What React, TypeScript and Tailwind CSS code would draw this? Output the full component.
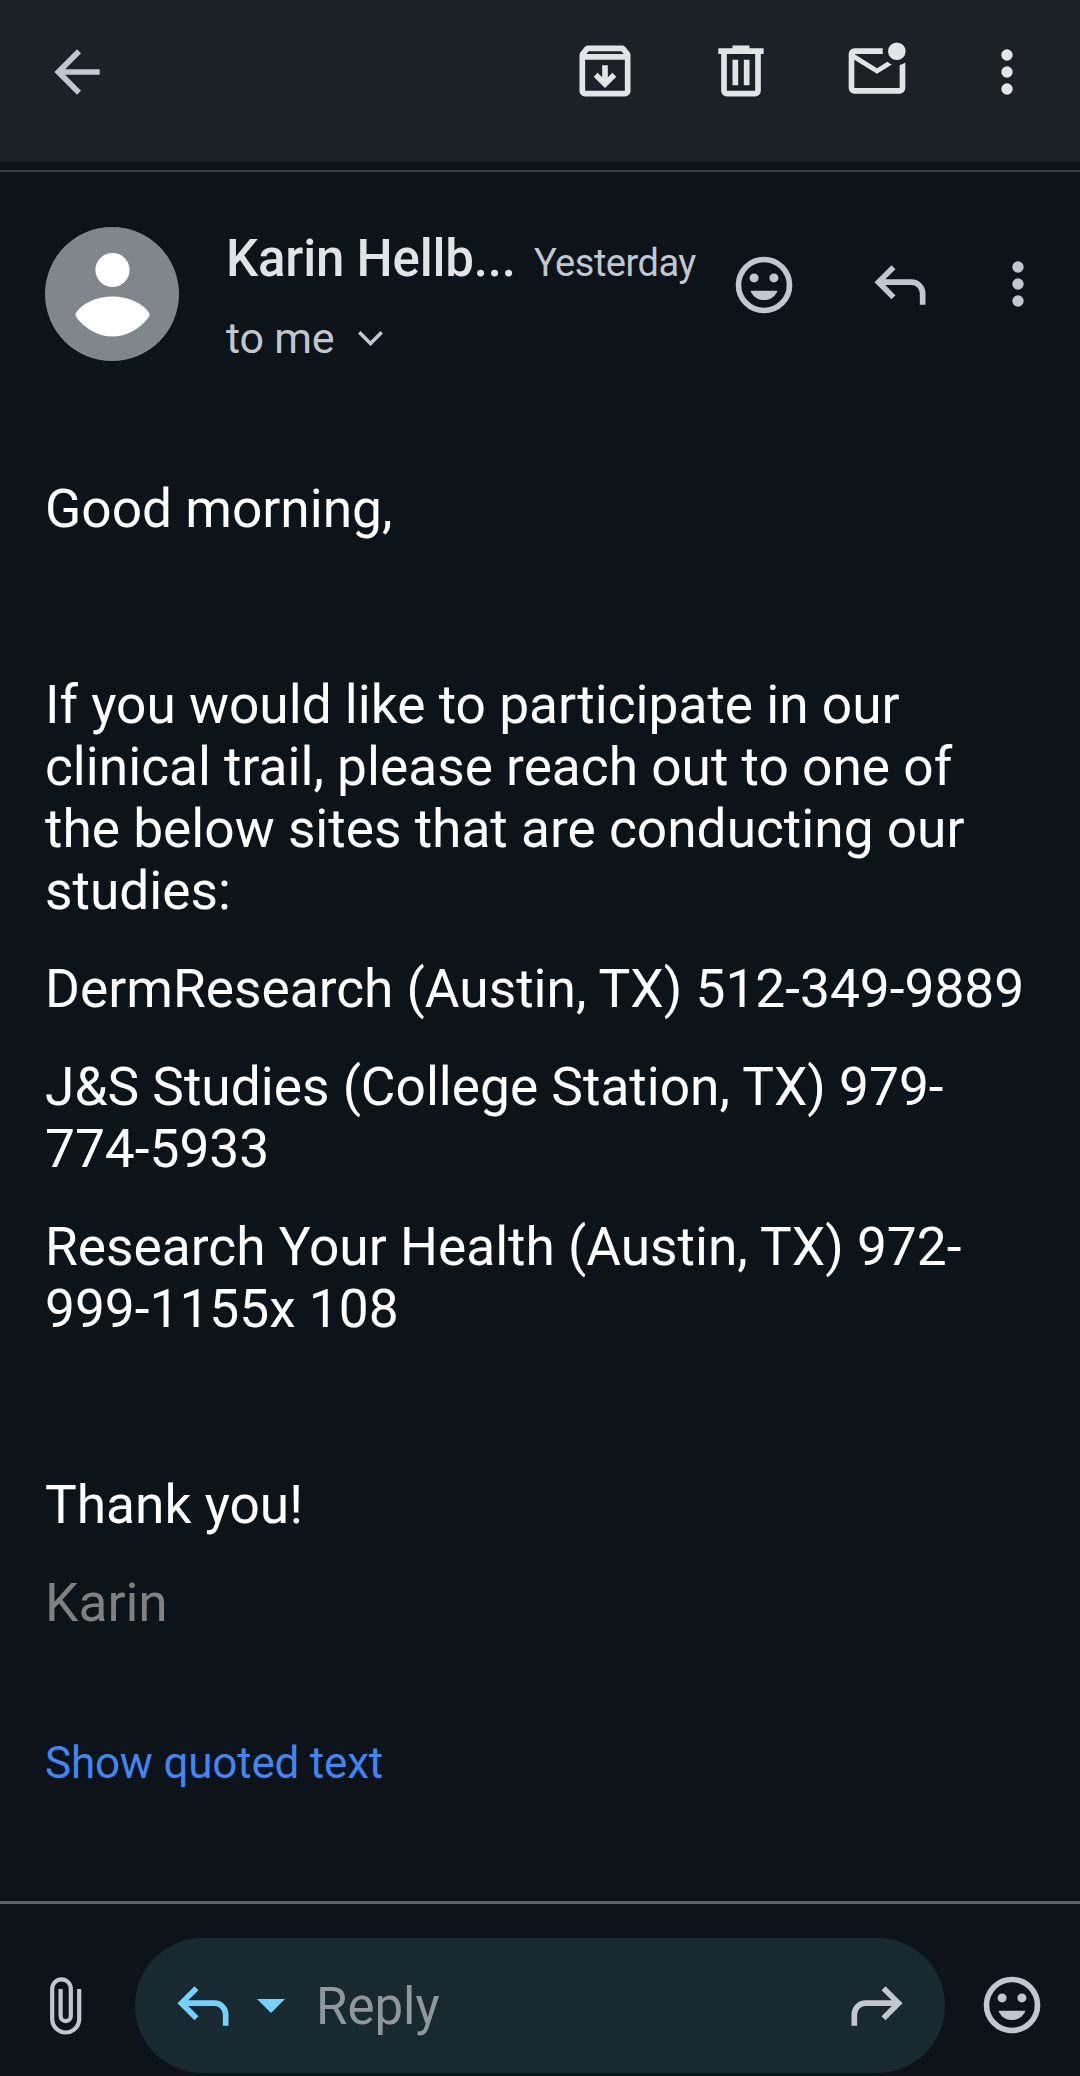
import type { ReactNode } from "react";

type IconProps = {
  children: ReactNode;
  className?: string;
};

function Icon({ children, className = "" }: Readonly<IconProps>) {
  return (
    <svg viewBox="0 0 24 24" fill="currentColor" className={`size-[68px] shrink-0 ${className}`}>
      {children}
    </svg>
  );
}

const REPLY_PATH =
  "M19 19v-4q0-1.25-.875-2.125T16 12H6.8l3.6 3.6L9 17l-6-6 6-6 1.4 1.4L6.8 10H16q2.075 0 3.538 1.463T21 15v4z";

function MoreIcon({ className }: Readonly<{ className?: string }>) {
  return (
    <Icon className={className}>
      <circle cx="12" cy="6" r="2" />
      <circle cx="12" cy="12" r="2" />
      <circle cx="12" cy="18" r="2" />
    </Icon>
  );
}

function SmileIcon({ className }: Readonly<{ className?: string }>) {
  return (
    <Icon className={className}>
      <circle cx="12" cy="12" r="9" fill="none" stroke="currentColor" strokeWidth="2" />
      <circle cx="8.5" cy="9.5" r="1.6" />
      <circle cx="15.5" cy="9.5" r="1.6" />
      <path d="M12 17.3c2.2 0 4-1.3 4.8-3.3H7.2c.8 2 2.6 3.3 4.8 3.3z" />
    </Icon>
  );
}

function TopBar() {
  return (
    <header className="flex h-[162px] shrink-0 items-start bg-[#1c2027] pt-[37px] pl-[43px] text-[#e2e3e5]">
      <Icon className="mt-px text-[#c1c7ce]">
        <path d="m7.825 13 5.6 5.6L12 20l-8-8 8-8 1.425 1.4-5.6 5.6H20v2z" />
      </Icon>
      <Icon className="ml-[460px]">
        <path
          fillRule="evenodd"
          d="m20.54 5.23-1.39-1.68C18.88 3.21 18.47 3 18 3H6c-.47 0-.88.21-1.16.55L3.46 5.23C3.17 5.57 3 6.02 3 6.5V19c0 1.1.9 2 2 2h14c1.1 0 2-.9 2-2V6.5c0-.48-.17-.93-.46-1.27zM6.24 5h11.52l.83 1H5.42l.82-1zM5 19V8h14v11H5z"
        />
        <path d="m12 18 4-4-1.4-1.4-1.6 1.6V10h-2v4.2l-1.6-1.6L8 14z" />
      </Icon>
      <Icon className="ml-[68px]">
        <path
          fillRule="evenodd"
          d="M7 21q-.825 0-1.412-.587T5 19V6H4V4h5V3h6v1h5v2h-1v13q0 .825-.587 1.413T17 21zM17 6H7v13h10zM9 17h2V8H9zm4 0h2V8h-2z"
        />
      </Icon>
      <Icon className="ml-[68px]">
        <path d="M4 20q-.825 0-1.412-.587T2 18V6q0-.825.588-1.412T4 4h10.1q-.1.5-.1 1t.1 1H4l8 5 3.65-2.275q.35.325.763.563t.862.412L12 13 4 8v10h16V9.9q.575-.125 1.075-.35T22 9v9q0 .825-.587 1.413T20 20z" />
        <circle cx="19" cy="5" r="3.1" />
      </Icon>
      <MoreIcon className="mt-px ml-[62px]" />
    </header>
  );
}

function Avatar() {
  return (
    <svg viewBox="0 0 134 134" className="mt-[55px] size-[134px] shrink-0">
      <circle cx="67" cy="67" r="67" fill="#81858c" />
      <circle cx="67.5" cy="43" r="17.1" fill="#fff" />
      <path
        d="M67.5 69.5c16 0 29.5 6.5 36 15.5 1.2 1.8 1.2 3.6 0 5.4-8.5 11.1-22 19.1-36 19.1s-27.5-8-36-19.1c-1.2-1.8-1.2-3.6 0-5.4 6.5-9 20-15.5 36-15.5z"
        fill="#fff"
      />
    </svg>
  );
}

function MessageHeader() {
  return (
    <div className="flex h-[273px] shrink-0 pl-[45px] text-[#c1c7ce]">
      <Avatar />
      <div className="ml-[47px] w-[484px] pt-[57px]">
        <div className="flex items-baseline leading-[60px] whitespace-nowrap">
          <span className="w-[308px] text-[51px] font-medium tracking-[-0.2px] text-[#e2e3e5]">Karin Hellb...</span>
          <span className="text-[38px] tracking-[-0.5px]">Yesterday</span>
        </div>
        <div className="mt-[15px] flex items-center leading-[60px]">
          <span className="w-[132px] text-[43px] tracking-[-0.2px]">to me</span>
          <svg viewBox="0 0 25 15" className="h-[15px] w-[25px]" fill="none" stroke="currentColor" strokeWidth="3.6">
            <path d="m1.3 1.3 11.2 11.2 11.2-11.2" />
          </svg>
        </div>
      </div>
      <SmileIcon className="mt-[79px] ml-[20px]" />
      <Icon className="mt-[79px] ml-[68px]">
        <path d={REPLY_PATH} />
      </Icon>
      <MoreIcon className="mt-[78px] ml-[50px]" />
    </div>
  );
}

function MessageBody() {
  return (
    <main className="flex grow flex-col gap-9 pt-[33px] pl-[45px] text-[53.25px] leading-[62px] whitespace-nowrap text-white">
      <p>Good morning,</p>
      <p className="mt-[98px]">
        If you would like to participate in our
        <br />
        clinical trail, please reach out to one of
        <br />
        the below sites that are conducting our
        <br />
        studies:
      </p>
      <p>DermResearch (Austin, TX) 512-349-9889</p>
      <p>
        J&amp;S Studies (College Station, TX) 979-
        <br />
        774-5933
      </p>
      <p>
        Research Your Health (Austin, TX) 972-
        <br />
        999-1155x 108
      </p>
      <p className="mt-[98px]">Thank you!</p>
      <p className="text-[#808080]">Karin</p>
      <a className="mt-[62px] text-[44px] tracking-[-0.2px] text-[#4285f4]">Show quoted text</a>
    </main>
  );
}

function ReplyBar() {
  return (
    <footer className="flex h-[175px] shrink-0 items-start border-t-[3px] border-[#5f6368] pt-[34px] text-[#c1c7ce]">
      <svg
        viewBox="0 0 32 58"
        className="mt-[39px] ml-[50px] h-[58px] w-[32px] shrink-0"
        fill="none"
        stroke="currentColor"
        strokeWidth="4.2"
      >
        <path d="M29.2 12v30a13.5 13.5 0 0 1-27 0V11.7a9.3 9.3 0 0 1 18.6 0V39a5.1 5.1 0 0 1-10.2 0V12" />
      </svg>
      <div className="ml-[53px] flex h-[135px] w-[810px] items-center rounded-full bg-[#192930] pl-[34px]">
        <Icon className="text-[#75d1ff]">
          <path d={REPLY_PATH} />
        </Icon>
        <svg viewBox="0 0 28 14" className="ml-[20px] h-[14px] w-[28px] text-[#75d1ff]" fill="currentColor">
          <path d="M0 0h28L14 14z" />
        </svg>
        <span className="ml-[31px] grow pt-[3px] text-[51px] text-[#8f979d]">Reply</span>
        <Icon className="mt-px mr-[34px] -scale-x-100">
          <path d={REPLY_PATH} />
        </Icon>
      </div>
      <SmileIcon className="mt-[33px] ml-[33px]" />
    </footer>
  );
}

export default function App() {
  return (
    <div className="flex h-[2076px] w-[1080px] flex-col overflow-hidden bg-[#0c1319] font-['Roboto',sans-serif]">
      <TopBar />
      <div className="mt-2 h-[2px] shrink-0 bg-[#3a4046]" />
      <MessageHeader />
      <MessageBody />
      <ReplyBar />
    </div>
  );
}
